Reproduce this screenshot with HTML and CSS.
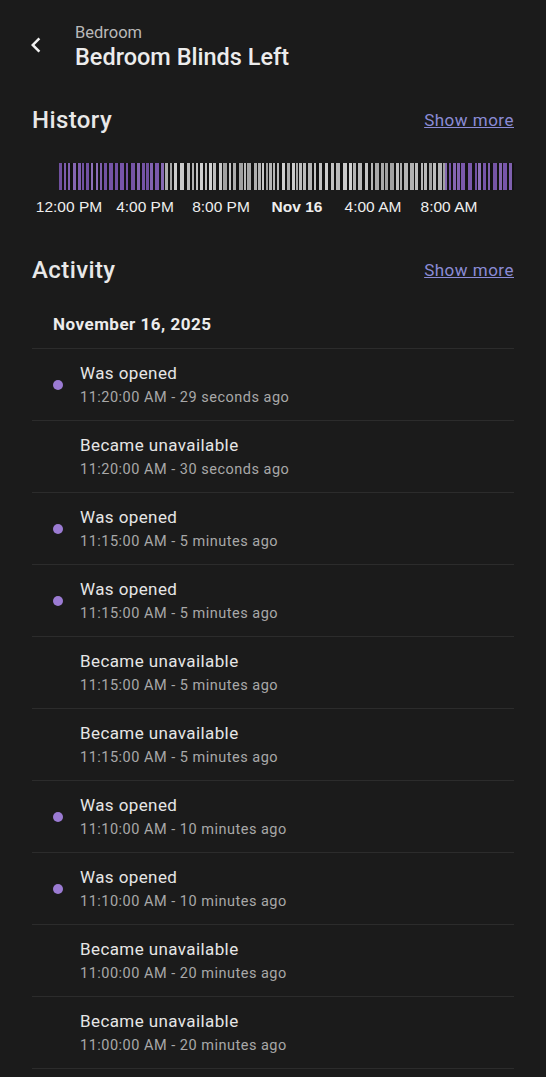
FILE: index.html
```html
<!DOCTYPE html>
<html>
<head>
  <title>Bedroom Blinds Left</title>
  <meta name="viewport" content="width=device-width, initial-scale=1.0">
  <link rel="stylesheet" href="styles.css">
</head>
<body>
  <div class="page">
    <header class="topbar">
      <button class="back" type="button" aria-label="Back">
        <svg width="30" height="30" viewBox="0 0 24 24"><path d="M15.41 7.41 14 6l-6 6 6 6 1.41-1.41L10.83 12z" fill="currentColor"/></svg>
      </button>
      <div class="titles">
        <div class="area">Bedroom</div>
        <div class="name">Bedroom Blinds Left</div>
      </div>
    </header>

    <section class="section history">
      <div class="section-head">
        <h2>History</h2>
        <a href="#">Show more</a>
      </div>
      <div class="timeline">
        <div class="bar" id="bar"></div>
        <div class="axis">
          <span>12:00 PM</span>
          <span>4:00 PM</span>
          <span>8:00 PM</span>
          <span class="day">Nov 16</span>
          <span>4:00 AM</span>
          <span>8:00 AM</span>
        </div>
      </div>
    </section>

    <section class="section">
      <div class="section-head">
        <h2>Activity</h2>
        <a href="#">Show more</a>
      </div>
      <div class="date">November 16, 2025</div>
      <ul class="log">
        <li class="entry on"><span class="dot"></span><div><div class="what">Was opened</div><div class="when">11:20:00 AM - 29 seconds ago</div></div></li>
        <li class="entry"><span class="dot"></span><div><div class="what">Became unavailable</div><div class="when">11:20:00 AM - 30 seconds ago</div></div></li>
        <li class="entry on"><span class="dot"></span><div><div class="what">Was opened</div><div class="when">11:15:00 AM - 5 minutes ago</div></div></li>
        <li class="entry on"><span class="dot"></span><div><div class="what">Was opened</div><div class="when">11:15:00 AM - 5 minutes ago</div></div></li>
        <li class="entry"><span class="dot"></span><div><div class="what">Became unavailable</div><div class="when">11:15:00 AM - 5 minutes ago</div></div></li>
        <li class="entry"><span class="dot"></span><div><div class="what">Became unavailable</div><div class="when">11:15:00 AM - 5 minutes ago</div></div></li>
        <li class="entry on"><span class="dot"></span><div><div class="what">Was opened</div><div class="when">11:10:00 AM - 10 minutes ago</div></div></li>
        <li class="entry on"><span class="dot"></span><div><div class="what">Was opened</div><div class="when">11:10:00 AM - 10 minutes ago</div></div></li>
        <li class="entry"><span class="dot"></span><div><div class="what">Became unavailable</div><div class="when">11:00:00 AM - 20 minutes ago</div></div></li>
        <li class="entry"><span class="dot"></span><div><div class="what">Became unavailable</div><div class="when">11:00:00 AM - 20 minutes ago</div></div></li>
      </ul>
    </section>
  </div>
  <script src="app.js"></script>
</body>
</html>
```

FILE: styles.css
```css
html, body {
  margin: 0;
  padding: 0;
  background: #1b1b1b;
  color: #e3e3e3;
  font-family: Roboto, "Noto Sans", sans-serif;
}
body {
  overflow: hidden;
}
.page {
  padding: 0 32px;
}
.topbar {
  display: flex;
  align-items: center;
  height: 90px;
  margin-left: -11px;
}
.back {
  width: 30px;
  height: 30px;
  padding: 0;
  border: 0;
  background: none;
  color: #f2f2f2;
  margin-right: 24px;
  display: flex;
}
.titles {
  display: flex;
  flex-direction: column;
  margin-top: 4px;
}
.area {
  font-size: 16.5px;
  line-height: 20px;
  color: #b9b9b9;
}
.name {
  font-size: 23.5px;
  font-weight: 500;
  line-height: 28px;
  color: #ececec;
}
.history {
  padding-top: 10px;
}
.section-head {
  display: flex;
  justify-content: space-between;
  align-items: center;
  height: 40px;
}
.section-head h2 {
  margin: 0;
  font-size: 24px;
  font-weight: 500;
  letter-spacing: 0.4px;
  color: #e8e8e8;
}
.section-head a {
  font-size: 17px;
  letter-spacing: 0.5px;
  color: #8b8bd6;
  text-decoration: underline;
}
.timeline {
  padding-top: 23px;
  height: 87px;
}
.bar {
  display: flex;
  height: 27px;
  margin-left: 27px;
  background: #121212;
}
.bar span {
  height: 100%;
}
.axis {
  display: flex;
  margin-left: -1px;
  padding-top: 6px;
}
.axis span {
  width: 76px;
  text-align: center;
  font-family: "Liberation Sans", Arial, sans-serif;
  font-size: 15.5px;
  line-height: 22px;
  color: #eeeeee;
}
.axis .day {
  font-weight: bold;
}
.date {
  padding: 24px 0 0 21px;
  height: 34px;
  font-size: 17px;
  line-height: 20px;
  letter-spacing: 0.5px;
  font-weight: 700;
  color: #ececec;
  border-bottom: 1px solid #2c2c2c;
}
.log {
  list-style: none;
  margin: 0;
  padding: 0;
}
.entry {
  display: flex;
  align-items: center;
  height: 71px;
  border-bottom: 1px solid #2c2c2c;
  padding-left: 21px;
}
.dot {
  width: 10px;
  height: 10px;
  border-radius: 50%;
  margin-right: 17px;
  flex-shrink: 0;
}
.entry.on .dot {
  background: #9b7bd3;
}
.what {
  font-size: 17px;
  line-height: 24px;
  letter-spacing: 0.4px;
  color: #e6e6e6;
}
.when {
  font-size: 14.5px;
  line-height: 20px;
  letter-spacing: 0.5px;
  color: #a8a8a8;
  margin-top: 3px;
}
```

FILE: app.js
```js
// striped state bar: purple = open, grey = closed/unavailable flips
const bar = document.getElementById('bar');
const spans = [[106, 'open'], [280, 'closed'], [68, 'open']];
let seed = 7;
function rand() {
  seed = (seed * 9301 + 49297) % 233280;
  return seed / 233280;
}
for (const [len, kind] of spans) {
  let used = 0;
  while (used < len) {
    const w = Math.min(len - used, 2 + Math.round(rand() * 2));
    const gap = Math.min(len - used - w, 1 + Math.round(rand() * 2));
    const s = document.createElement('span');
    s.style.width = w + 'px';
    if (kind === 'open') {
      const l = 46 + Math.round(rand() * 12);
      s.style.background = 'hsl(264, 33%, ' + l + '%)';
    } else {
      const g = 160 + Math.round(rand() * 50);
      s.style.background = 'rgb(' + g + ',' + g + ',' + g + ')';
    }
    bar.appendChild(s);
    used += w;
    if (gap > 0) {
      const d = document.createElement('span');
      d.style.width = gap + 'px';
      bar.appendChild(d);
      used += gap;
    }
  }
}
```
